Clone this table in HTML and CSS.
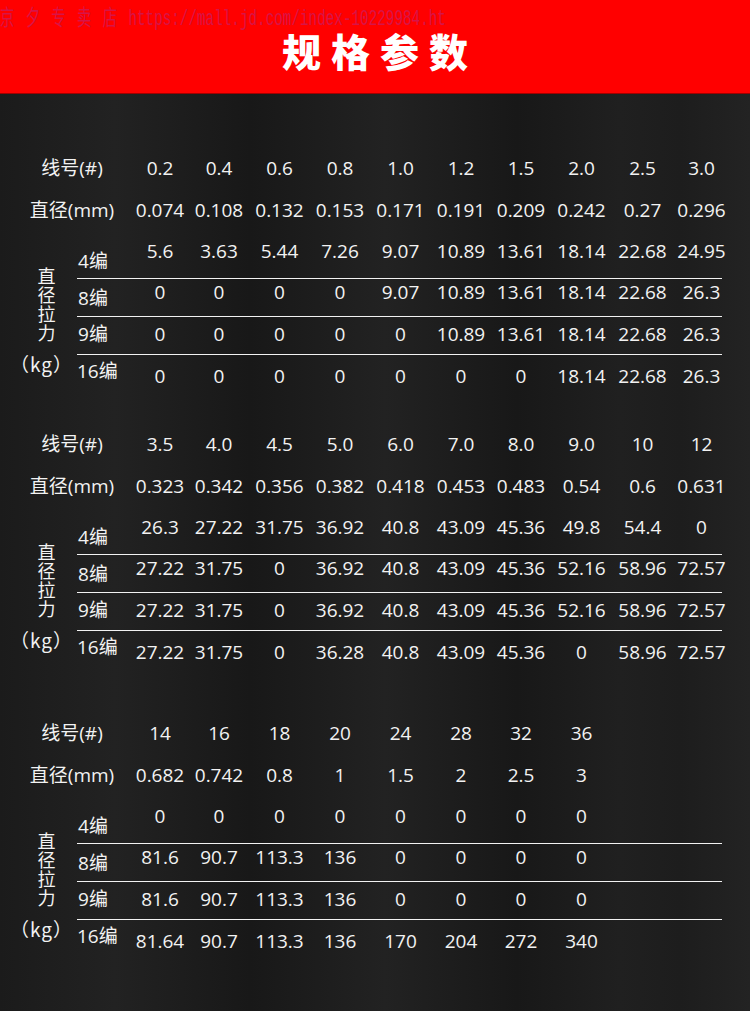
FILE: index.html
```html
<!DOCTYPE html>
<html lang="zh-CN">
<head>
<meta charset="utf-8">
<title>规格参数</title>
<link rel="stylesheet" href="styles.css">
</head>
<body>
<div class="page">
  <header class="banner">
    <div class="watermark"><span class="wm-cjk">京夕专卖店</span>https://mall.jd.com/index-10229984.ht</div>
    <h1 class="title">规格参数</h1>
  </header>
  <main class="specs">
    <section class="spec">
      <div class="row"><div class="rowlabel">线号(#)</div><div>0.2</div><div>0.4</div><div>0.6</div><div>0.8</div><div>1.0</div><div>1.2</div><div>1.5</div><div>2.0</div><div>2.5</div><div>3.0</div></div>
      <div class="row"><div class="rowlabel">直径(mm)</div><div>0.074</div><div>0.108</div><div>0.132</div><div>0.153</div><div>0.171</div><div>0.191</div><div>0.209</div><div>0.242</div><div>0.27</div><div>0.296</div></div>
      <div class="braid">
        <div class="braid-label"><div class="vert">直<br>径<br>拉<br>力</div><div class="kg">（kg）</div></div>
        <div class="braid-rows">
          <div class="brow b1"><div class="sub">4编</div><div>5.6</div><div>3.63</div><div>5.44</div><div>7.26</div><div>9.07</div><div>10.89</div><div>13.61</div><div>18.14</div><div>22.68</div><div>24.95</div></div>
          <div class="brow b2"><div class="sub">8编</div><div>0</div><div>0</div><div>0</div><div>0</div><div>9.07</div><div>10.89</div><div>13.61</div><div>18.14</div><div>22.68</div><div>26.3</div></div>
          <div class="brow b3"><div class="sub">9编</div><div>0</div><div>0</div><div>0</div><div>0</div><div>0</div><div>10.89</div><div>13.61</div><div>18.14</div><div>22.68</div><div>26.3</div></div>
          <div class="brow b4"><div class="sub">16编</div><div>0</div><div>0</div><div>0</div><div>0</div><div>0</div><div>0</div><div>0</div><div>18.14</div><div>22.68</div><div>26.3</div></div>
        </div>
      </div>
    </section>

    <section class="spec">
      <div class="row"><div class="rowlabel">线号(#)</div><div>3.5</div><div>4.0</div><div>4.5</div><div>5.0</div><div>6.0</div><div>7.0</div><div>8.0</div><div>9.0</div><div>10</div><div>12</div></div>
      <div class="row"><div class="rowlabel">直径(mm)</div><div>0.323</div><div>0.342</div><div>0.356</div><div>0.382</div><div>0.418</div><div>0.453</div><div>0.483</div><div>0.54</div><div>0.6</div><div>0.631</div></div>
      <div class="braid">
        <div class="braid-label"><div class="vert">直<br>径<br>拉<br>力</div><div class="kg">（kg）</div></div>
        <div class="braid-rows">
          <div class="brow b1"><div class="sub">4编</div><div>26.3</div><div>27.22</div><div>31.75</div><div>36.92</div><div>40.8</div><div>43.09</div><div>45.36</div><div>49.8</div><div>54.4</div><div>0</div></div>
          <div class="brow b2"><div class="sub">8编</div><div>27.22</div><div>31.75</div><div>0</div><div>36.92</div><div>40.8</div><div>43.09</div><div>45.36</div><div>52.16</div><div>58.96</div><div>72.57</div></div>
          <div class="brow b3"><div class="sub">9编</div><div>27.22</div><div>31.75</div><div>0</div><div>36.92</div><div>40.8</div><div>43.09</div><div>45.36</div><div>52.16</div><div>58.96</div><div>72.57</div></div>
          <div class="brow b4"><div class="sub">16编</div><div>27.22</div><div>31.75</div><div>0</div><div>36.28</div><div>40.8</div><div>43.09</div><div>45.36</div><div>0</div><div>58.96</div><div>72.57</div></div>
        </div>
      </div>
    </section>

    <section class="spec spec-last">
      <div class="row"><div class="rowlabel">线号(#)</div><div>14</div><div>16</div><div>18</div><div>20</div><div>24</div><div>28</div><div>32</div><div>36</div></div>
      <div class="row"><div class="rowlabel">直径(mm)</div><div>0.682</div><div>0.742</div><div>0.8</div><div>1</div><div>1.5</div><div>2</div><div>2.5</div><div>3</div></div>
      <div class="braid">
        <div class="braid-label"><div class="vert">直<br>径<br>拉<br>力</div><div class="kg">（kg）</div></div>
        <div class="braid-rows">
          <div class="brow b1"><div class="sub">4编</div><div>0</div><div>0</div><div>0</div><div>0</div><div>0</div><div>0</div><div>0</div><div>0</div></div>
          <div class="brow b2"><div class="sub">8编</div><div>81.6</div><div>90.7</div><div>113.3</div><div>136</div><div>0</div><div>0</div><div>0</div><div>0</div></div>
          <div class="brow b3"><div class="sub">9编</div><div>81.6</div><div>90.7</div><div>113.3</div><div>136</div><div>0</div><div>0</div><div>0</div><div>0</div></div>
          <div class="brow b4"><div class="sub">16编</div><div>81.64</div><div>90.7</div><div>113.3</div><div>136</div><div>170</div><div>204</div><div>272</div><div>340</div></div>
        </div>
      </div>
    </section>
  </main>
</div>
</body>
</html>
```

FILE: styles.css
```css
html, body {
  margin: 0;
  padding: 0;
  background: #1c1c1c;
}

.page {
  width: 750px;
  min-height: 1011px;
  overflow: hidden;
  font-family: "Open Sans", "Noto Sans CJK SC", sans-serif;
  font-size: 19px;
  font-weight: 400;
  color: #f2f2f2;
  background: linear-gradient(90deg, #1b1b1b 0px, #222222 115px, #181818 250px, #222222 385px, #181818 517px, #202020 620px, #1d1d1d 680px, #232323 750px);
}

.banner {
  position: relative;
  height: 93px;
  background: #ff0000;
  box-shadow: 0 1px 0 #a00000;
  overflow: hidden;
}

.watermark {
  position: absolute;
  top: 1px;
  left: 0;
  white-space: nowrap;
  font-family: "Liberation Mono", "Noto Sans CJK SC", monospace;
  font-size: 22px;
  line-height: 28px;
  font-weight: 400;
  color: #d81448;
  transform: scaleX(0.65);
  transform-origin: 0 0;
}

.wm-cjk {
  font-family: "Noto Sans CJK SC", sans-serif;
  font-weight: 400;
  letter-spacing: 17.5px;
}

.title {
  margin: 0;
  padding: 29px 0 0 10px;
  text-align: center;
  font-family: "Noto Sans CJK SC", sans-serif;
  font-size: 39px;
  line-height: 42px;
  font-weight: 900;
  letter-spacing: 10px;
  color: #ffffff;
}

.specs {
  padding-top: 54px;
}

.spec {
  margin-bottom: 28px;
}

.spec-last {
  margin-top: 41px;
}

.row {
  display: grid;
  grid-template-columns: 131px 58px 60px 61px 60px 61px 60px 60px 61px 61px 57px;
  height: 42px;
  line-height: 42px;
  text-align: center;
  white-space: nowrap;
}

.rowlabel {
  padding-left: 13px;
}

.braid {
  display: grid;
  grid-template-columns: 77px 645px;
}

.braid-label {
  padding-left: 16px;
  padding-top: 35px;
  text-align: center;
  font-family: "Noto Sans CJK SC", sans-serif;
}

.vert {
  font-size: 18px;
  line-height: 19px;
}

.kg {
  font-size: 19px;
  line-height: 19px;
  margin-top: 12px;
  margin-left: -10px;
  letter-spacing: 1px;
}

.brow {
  display: grid;
  grid-template-columns: 54px 58px 60px 61px 60px 61px 60px 60px 61px 61px 57px;
  width: 645px;
  box-sizing: border-box;
  line-height: 26px;
  text-align: center;
  white-space: nowrap;
}

.brow .sub {
  padding-right: 22px;
}

.b1 { height: 47px; }
.b1 > div { padding-top: 7px; }
.b1 > .sub { padding-top: 17px; }

.b2 { height: 38px; border-top: 1px solid #f2f2f2; }
.b2 > div { padding-top: 0; }
.b2 > .sub { padding-top: 6px; }

.b3 { height: 38px; border-top: 1px solid #f2f2f2; }
.b3 > div { padding-top: 4px; }
.b3 > .sub { padding-top: 4px; }

.b4 { height: 41px; border-top: 1px solid #f2f2f2; }
.b4 > div { padding-top: 8px; }
.b4 > .sub { padding-top: 3px; }
```
